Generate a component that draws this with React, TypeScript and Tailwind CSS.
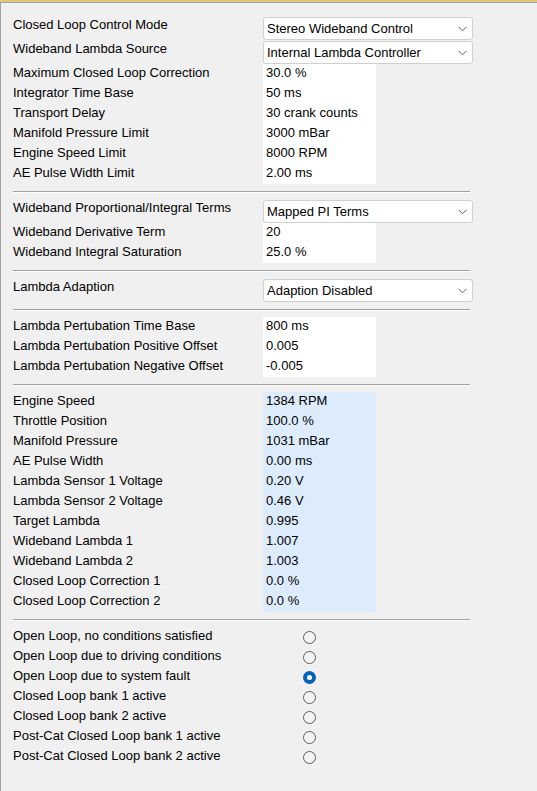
const font = { fontFamily: '"Liberation Sans", Arial, sans-serif' };

type Row = { label: string; value: string };

function Chevron() {
  return (
    <svg width="9" height="6" viewBox="0 0 9 6" className="shrink-0">
      <polyline points="0.5,0.8 4.5,4.8 8.5,0.8" fill="none" stroke="#5f5f5f" strokeWidth="1" />
    </svg>
  );
}

function SelectRow({ label, value }: Row) {
  return (
    <div className="flex h-[24px] items-start">
      <div className="w-[250px] shrink-0 leading-[18px]">{label}</div>
      <div className="mt-px flex h-[23px] w-[210px] items-center justify-between rounded-[3px] border border-[#d0d0d0] bg-white pl-[3px] pr-[5px]">
        <span>{value}</span>
        <Chevron />
      </div>
    </div>
  );
}

function ValueRows({ rows, tint }: { rows: Row[]; tint: string }) {
  return (
    <div className="flex">
      <div className="w-[250px] shrink-0">
        {rows.map((r) => (
          <div key={r.label} className="h-5 leading-[18px]">
            {r.label}
          </div>
        ))}
      </div>
      <div className={`w-[113px] ${tint}`}>
        {rows.map((r) => (
          <div key={r.label} className="h-5 pl-[3px] leading-[18px]">
            {r.value}
          </div>
        ))}
      </div>
    </div>
  );
}

function Divider() {
  return <div className="mt-[7px] mb-[6px] w-[457px] border-t border-b border-t-[#a0a0a0] border-b-white" />;
}

const limits: Row[] = [
  { label: "Maximum Closed Loop Correction", value: "30.0 %" },
  { label: "Integrator Time Base", value: "50 ms" },
  { label: "Transport Delay", value: "30 crank counts" },
  { label: "Manifold Pressure Limit", value: "3000 mBar" },
  { label: "Engine Speed Limit", value: "8000 RPM" },
  { label: "AE Pulse Width Limit", value: "2.00 ms" },
];

const terms: Row[] = [
  { label: "Wideband Derivative Term", value: "20" },
  { label: "Wideband Integral Saturation", value: "25.0 %" },
];

const perturb: Row[] = [
  { label: "Lambda Pertubation Time Base", value: "800 ms" },
  { label: "Lambda Pertubation Positive Offset", value: "0.005" },
  { label: "Lambda Pertubation Negative Offset", value: "-0.005" },
];

const live: Row[] = [
  { label: "Engine Speed", value: "1384 RPM" },
  { label: "Throttle Position", value: "100.0 %" },
  { label: "Manifold Pressure", value: "1031 mBar" },
  { label: "AE Pulse Width", value: "0.00 ms" },
  { label: "Lambda Sensor 1 Voltage", value: "0.20 V" },
  { label: "Lambda Sensor 2 Voltage", value: "0.46 V" },
  { label: "Target Lambda", value: "0.995" },
  { label: "Wideband Lambda 1", value: "1.007" },
  { label: "Wideband Lambda 2", value: "1.003" },
  { label: "Closed Loop Correction 1", value: "0.0 %" },
  { label: "Closed Loop Correction 2", value: "0.0 %" },
];

const states = [
  "Open Loop, no conditions satisfied",
  "Open Loop due to driving conditions",
  "Open Loop due to system fault",
  "Closed Loop bank 1 active",
  "Closed Loop bank 2 active",
  "Post-Cat Closed Loop bank 1 active",
  "Post-Cat Closed Loop bank 2 active",
];

function Radio({ on }: { on: boolean }) {
  return on ? (
    <span className="flex h-[13px] w-[13px] items-center justify-center rounded-full bg-[#0063b8]">
      <span className="h-[5px] w-[5px] rounded-full bg-white" />
    </span>
  ) : (
    <span className="h-[13px] w-[13px] rounded-full border border-[#5c5c5c] bg-[#f5f5f5]" />
  );
}

export default function App() {
  return (
    <div className="min-h-[791px] border-t-2 border-[#e5c57c] bg-[#f0f0f0]" style={font}>
      <div className="min-h-[789px] border-t border-l border-[#a0a0a0] pl-3 pt-[13px] text-[13px] text-black">
        <SelectRow label="Closed Loop Control Mode" value="Stereo Wideband Control" />
        <SelectRow label="Wideband Lambda Source" value="Internal Lambda Controller" />
        <ValueRows rows={limits} tint="bg-white" />
        <Divider />

        <SelectRow label="Wideband Proportional/Integral Terms" value="Mapped PI Terms" />
        <ValueRows rows={terms} tint="bg-white" />
        <Divider />

        <SelectRow label="Lambda Adaption" value="Adaption Disabled" />
        <Divider />

        <ValueRows rows={perturb} tint="bg-white" />
        <Divider />

        <ValueRows rows={live} tint="bg-[#ddecfc]" />
        <Divider />

        <div>
          {states.map((s, i) => (
            <div key={s} className="flex h-5">
              <div className="w-[250px] shrink-0 leading-[18px]">{s}</div>
              <div className="flex items-center pl-[40px]">
                <Radio on={i === 2} />
              </div>
            </div>
          ))}
        </div>
      </div>
    </div>
  );
}
